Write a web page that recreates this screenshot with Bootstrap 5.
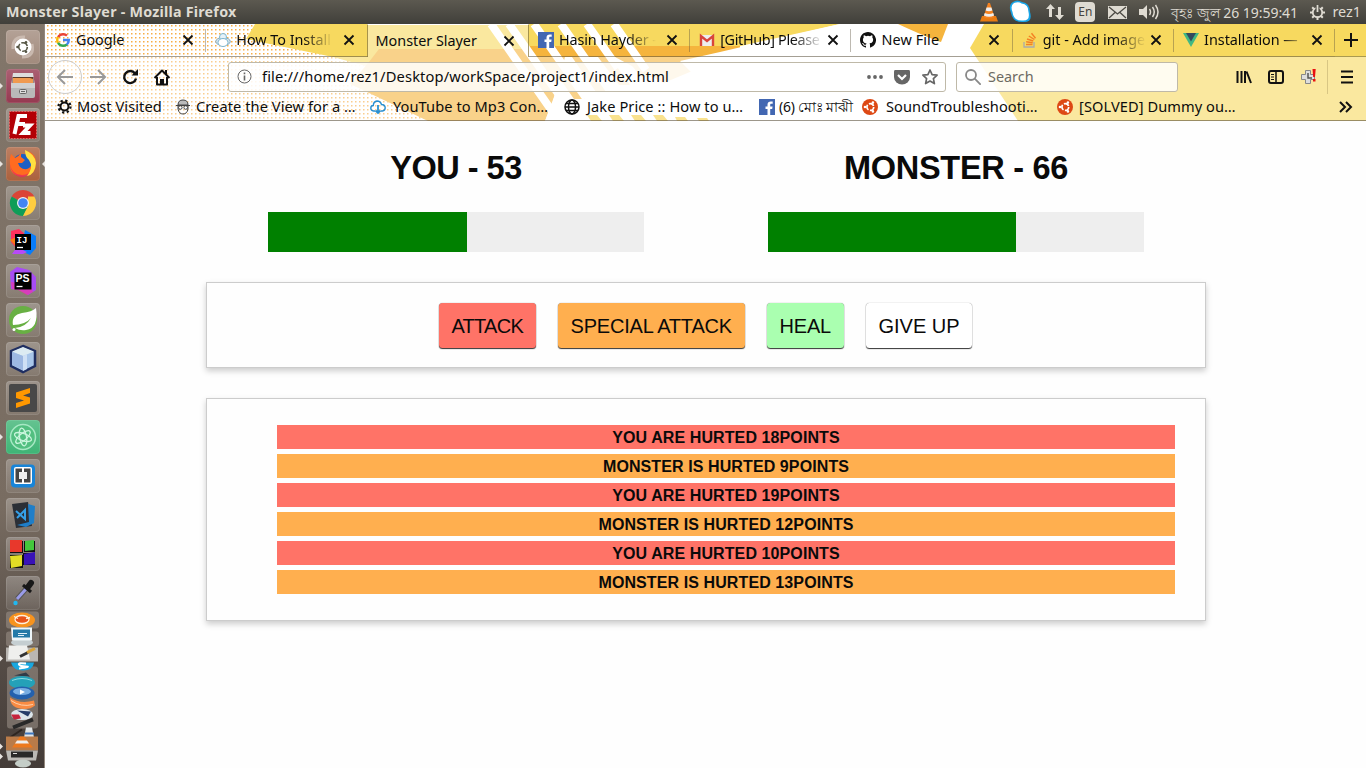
<!DOCTYPE html>
<html lang="en">
<head>
<meta charset="utf-8">
<title>Monster Slayer - Mozilla Firefox</title>
<link href="https://cdn.jsdelivr.net/npm/bootstrap@5.3.0/dist/css/bootstrap.min.css" rel="stylesheet">
<script src="https://cdn.jsdelivr.net/npm/bootstrap@5.3.0/dist/js/bootstrap.bundle.min.js"></script>
<style>
body{height:768px;overflow:hidden;font-family:"Noto Sans","Open Sans",sans-serif;font-size:14.4px;color:#0c0c0c;background:#fefefe}
svg{display:block;flex:none}
.topbar{height:24px;background:linear-gradient(#5c5950,#403f3a);color:#dfdbd2;padding:0 5px 0 6px}
.topbar b{font-size:14.3px;letter-spacing:.23px}
.topbar .clock{font-size:14px;letter-spacing:-.05px;width:128px;white-space:nowrap}
.dock{width:45px;border-right:1px solid #93887e;padding:5.5px 0 0 5.5px;flex:none;background:linear-gradient(#82766a,#786c61 65%,#554c46 85%,#443c38)}
.tile{width:34px;height:34px;margin-bottom:5px;border-radius:4px;background:linear-gradient(rgba(255,255,255,.26),rgba(255,255,255,.08));box-shadow:inset 0 0 0 1px rgba(255,255,255,.1);position:relative;flex:none}
.tile.run::before{content:"";position:absolute;left:-5.5px;top:14px;border:3px solid transparent;border-left:3px solid #e8e4e0;border-right:0}
.tile.focus::after{content:"";position:absolute;right:-5px;top:14px;border:3px solid transparent;border-right:3px solid #e8e4e0;border-left:0}
.chrome{height:97px;position:relative;isolation:isolate}
.theme{position:absolute;inset:0;z-index:-1}
.tabrow{height:33px}
.tabx{width:161.3px;height:33px;padding:0 11px;gap:5px;position:relative;flex:none;border-bottom:1px solid rgba(90,80,60,.55)}
.tabx::after{content:"";position:absolute;right:0;top:5px;bottom:4px;width:1px;background:rgba(90,80,60,.4)}
.tabx.on{width:162.3px;margin-left:-1px;background:rgba(255,255,255,.4);border:1px solid rgba(110,90,20,.6);border-top:1px solid #fff;border-bottom:0}
.tabx.on::after,.tabx.noline::after{display:none}
.tabx span{width:97px;white-space:nowrap;overflow:hidden;letter-spacing:-.03px;flex:none}
.tabx .fade-r{-webkit-mask-image:linear-gradient(90deg,#000 70%,transparent 100%)}
.tabx .x{margin-left:auto;margin-right:1.5px}
.navrow{height:39px}
.field{height:30px;border:1px solid #bfb9a8;border-radius:3px;background:rgba(255,255,255,.84)}
.url{font-size:14.7px;letter-spacing:.13px;margin-left:2px}
.bmrow{height:25px;border-bottom:1px solid rgba(90,80,60,.6);padding:0 0 2px 12px}
.bm{white-space:nowrap;gap:5px;flex:none;font-size:14.6px;letter-spacing:.08px}
.game{width:1000px;margin-left:161px;font-family:"Liberation Sans",sans-serif;color:#0a0a0a}
.game h1{font-size:32.5px;font-weight:700;line-height:45px;letter-spacing:-.3px;margin:0 0 21px;padding-top:25px}
.track{width:376px;height:40px;background:#eee}
.track div{height:40px;background:green}
.panel{border:1px solid #ccc;box-shadow:0 3px 6px #ccc;background:#fefefe;margin-top:30px}
.controls{height:86px;padding-top:20px;gap:22.500px;padding-right:1px}
.act{font-size:20px;line-height:20px;height:44.500px;border:0;border-radius:3.500px;box-shadow:0 1px 1px #333,0 0 1px #888;padding:1px 0 0;color:#0a0a0a;white-space:nowrap}
.log{height:223px;padding:26px 30px 0 70px}
.log li{height:24px;line-height:24px;padding-top:1px;margin-bottom:5px;font-size:16px;font-weight:700;text-align:center;letter-spacing:.1px}
.you{background:#ff7367}.mon{background:#ffaf4f}.heal{background:#aaffb0}
</style>
</head>
<body class="d-flex flex-column">
<svg width="0" height="0" class="position-absolute"><defs>
<symbol id="x" viewBox="0 0 12 12"><path d="M1.5 1.5l9 9M10.5 1.5l-9 9" stroke="#111" stroke-width="1.8"/></symbol>
<symbol id="fb" viewBox="0 0 16 16"><path fill="#4267b2" d="M0 0h16v16H0z"/><path fill="#fff" d="M8.5 16V10H6.5V7.4h2V5.8C8.500 3.500 9.800 2.500 11.800 2.500h1.900v2.300h-1.300c-1 0-1.200.5-1.200 1.200v1.400h2.400L13.200 10h-2v6z"/></symbol>
<symbol id="ub" viewBox="0 0 16 16"><circle cx="8" cy="8" r="8" fill="#dd4814"/><circle cx="8.300" cy="8" r="3.400" fill="none" stroke="#fff" stroke-width="1.700" stroke-dasharray="5.600 1.500"/><g fill="#fff"><circle cx="3" cy="8" r="1.300"/><circle cx="10.900" cy="3.600" r="1.300"/><circle cx="10.900" cy="12.400" r="1.300"/></g></symbol>
<symbol id="cone" viewBox="0 0 20 20"><path fill="#e87b12" d="M3 14h14l2 5.500H1z"/><path fill="#f58220" d="M9 1h2l4.500 14q-5.500 3-11 0z"/><path fill="#eee" d="M7.600 5.500h4.800l1 3q-3.400 1.600-6.800 0zM5.800 11q4.200 2 8.400 0l.9 2.600q-5 2.400-10.200 0z"/></symbol>
</defs></svg>

<header class="topbar d-flex align-items-center">
  <b>Monster Slayer - Mozilla Firefox</b>
  <div class="d-flex align-items-center ms-auto">
    <svg width="20" height="20" style="margin-right:9px"><use href="#cone"/></svg>
    <svg width="26" height="24" style="margin-right:11px" viewBox="0 0 26 24"><path fill="#18a5e8" d="M5 2q4-3 9 0 8 1 8 10 3 10-6 10-11 1-13-9Q0 5 5 2z"/><path fill="#fff" d="M6 3q5-1.500 7.500.5Q20.500 4 20.500 12q2 9-6 8.500Q5.500 21 4.500 12 2 5.500 6 3z"/></svg>
    <svg width="20" height="18" viewBox="0 0 20 18" class="me-2"><path fill="#dfdbd2" d="M5.500 1L10 6H7v8H4V6H1zM14.500 17L10 12h3V4h3v8h3z"/></svg>
    <div class="rounded-1 text-center me-2" style="width:20px;height:20px;line-height:20px;font-size:12px;margin-left:2px;background:#dfdbd2;color:#45433e">En</div>
    <svg width="19" height="13" viewBox="0 0 19 13" style="margin:0 11px 0 5px"><path fill="#dfdbd2" d="M0 0h19v13H0z"/><path fill="none" stroke="#4b4943" stroke-width="1.300" d="M1 1l8.500 7L18 1M1 12l6-5.500M18 12l-6-5.500"/></svg>
    <svg width="22" height="18" viewBox="0 0 22 18" class="me-2"><path fill="#dfdbd2" d="M1 6h4l4-4v14l-4-4H1z"/><path fill="none" stroke="#dfdbd2" stroke-width="1.500" d="M11.500 6q2 3 0 6M14.500 4q3.500 5 0 10M17.500 2q5 7 0 14"/></svg>
    <span class="clock" style="margin-left:3px">বৃহঃ জুল 26 19:59:41</span>
    <svg width="17" height="17" viewBox="0 0 17 17" style="margin:0 6px 0 10px"><circle cx="8.500" cy="8.500" r="4.700" fill="none" stroke="#dfdbd2" stroke-width="1.800"/><g stroke="#dfdbd2" stroke-width="2"><path d="M8.500 12.500V16M1 8.500h3M13 8.500h3M3.200 3.200l2 2M13.800 3.200l-2 2M3.200 13.800l2-2M13.800 13.800l-2-2"/></g><path stroke="#4a4842" stroke-width="4" d="M8.500 1v6"/><path stroke="#dfdbd2" stroke-width="1.800" d="M8.500 1v7"/></svg>
    <span>rez1</span>
  </div>
</header>

<div class="d-flex flex-grow-1" style="min-height:0">
<aside class="dock d-flex flex-column">
  <div class="tile" style="background-color:#9a8172"><svg width="34" height="34" viewBox="0 0 34 34"><path d="M7 19q-1-13 12-12M26 14q3 13-10 13" fill="none" stroke="#c9b9af" stroke-width="3"/><circle cx="17" cy="17" r="8.500" fill="#fff"/><circle cx="17" cy="17" r="4.300" fill="none" stroke="#554" stroke-width="1.600" stroke-dasharray="7.400 1.600"/><g fill="#554"><circle cx="11.500" cy="17" r="1.300"/><circle cx="20" cy="12.200" r="1.300"/><circle cx="20" cy="21.800" r="1.300"/></g></svg></div>
  <div class="tile run" style="background-color:#8d2842"><svg width="34" height="34" viewBox="0 0 34 34"><path fill="#ddd" d="M7 4h20l2 13H5z"/><path fill="#5b3b2a" d="M6.500 8h21v6h-21z"/><path fill="#f09a50" d="M7 9h17l3 1v4H7z"/><path fill="#b9b9b9" d="M5 14h24v13q0 2-2 2H7q-2 0-2-2z"/><path fill="#d0d0d0" d="M5 14h24v5H5z"/><rect x="13.500" y="20.500" width="7" height="4" rx="1" fill="#ddd" stroke="#666"/><path stroke="#666" d="M15 22.500h4"/></svg></div>
  <div class="tile"><svg width="34" height="34" viewBox="0 0 34 34"><path fill="#b30006" stroke="#e66" stroke-dasharray="1.500 1.500" d="M3.500 3.500h27v27h-27z"/><path fill="none" stroke="#fff" stroke-width="4" d="M21 8h-8.500L8.500 26M11 16h8M17 17.500h7l-7 7.500h7.500"/></svg></div>
  <div class="tile run focus" style="background-color:#a4532c"><svg width="34" height="34" viewBox="0 0 34 34"><circle cx="17" cy="18" r="11" fill="#1b5fc4"/><path fill="#ff6b20" d="M5 7l4 4q4-2 6-5v4l4 3-3 3h-4q2 7 9 6 6-2 4-10-1-4-3-8 8 3 8 12 0 13-13 13T4 18Q3 12 5 7z"/><path fill="#ffe040" d="M19 3q10 4 11 13-1 12-9 13 7-9 2-16-4-3-4-10z"/><path fill="#ed275e" opacity=".7" d="M4 17q2 11 12 11 4 0 7-2-3 5-9 4-9-2-10-13z"/></svg></div>
  <div class="tile"><svg width="34" height="34" viewBox="0 0 34 34"><path fill="#db4437" d="M5.700 10.500a13 13 0 0 1 22.600 0L17 17z"/><path fill="#0f9d58" d="M5.700 10.500A13 13 0 0 0 17 30l5.500-10L17 17z"/><path fill="#ffcd40" d="M28.300 10.500A13 13 0 0 1 17 30l5-10V10.500z"/><circle cx="17" cy="17" r="6" fill="#f2f2f2"/><circle cx="17" cy="17" r="4.800" fill="#4285f4"/></svg></div>
  <div class="tile"><svg width="34" height="34" viewBox="0 0 34 34"><path fill="#fe315d" d="M5 6l8-2 7 6-8 15-7-8z"/><path fill="#f97a12" d="M4 15l6-3v9z"/><path fill="#087cfa" d="M19 5l11 6v12l-6 7-9-4z"/><path fill="#b74af7" d="M6 29l5-7 10 5-4 2z"/><path fill="#000" d="M9 9h16v16H9z"/><path stroke="#fff" d="M11 22.500h6" stroke-width="1.300"/><text x="10.500" y="18" font-size="9" font-weight="700" fill="#fff" font-family="Liberation Mono">IJ</text></svg></div>
  <div class="tile"><svg width="34" height="34" viewBox="0 0 34 34"><path fill="#a74cf5" d="M4 8l7-5 12 3 7 7v13l-8 5-9-5-8-1z"/><path fill="#ff318c" d="M5 18l20 4 2 6-6 3-9-5-6-1z" opacity=".55"/><path fill="#000" d="M8.500 8.500h17v17h-17z"/><path stroke="#fff" stroke-width="1.300" d="M10.500 22.500h6"/><text x="9.500" y="18" font-size="10.500" font-weight="700" fill="#fff" font-family="Liberation Sans">PS</text></svg></div>
  <div class="tile"><svg width="34" height="34" viewBox="0 0 34 34"><circle cx="17" cy="17" r="14" fill="#68b043"/><path fill="#fff" d="M30 5q3 20-10 22-6 1-11-2 11-1 16-10-6 7-18 7-2-10 9-12 10-1 14-5z"/><circle cx="8" cy="26.500" r="1.500" fill="#fff"/></svg></div>
  <div class="tile"><svg width="34" height="34" viewBox="0 0 34 34"><path fill="#a8c6ea" stroke="#1f2e61" stroke-width="2.500" d="M17 4l12 5v15l-12 6-12-6V9z"/><path fill="#dcebf2" d="M17 5l11 4.500L17 14 6 9.500z"/><path fill="#9db8e2" d="M6 10l11 4v14L6 23z"/><path fill="#cfe0f5" d="M17 14l4-2v15l-4 2z"/></svg></div>
  <div class="tile"><svg width="34" height="34" viewBox="0 0 34 34"><rect x="3" y="3" width="28" height="28" rx="2" fill="#484848"/><path fill="#ff9800" d="M10 11.500L24 7v5l-7 2.500 7 2v6L10 27v-5l8-2.500-8-2.500z"/></svg></div>
  <div class="tile run" style="background-color:#2fae6a"><svg width="34" height="34" viewBox="0 0 34 34"><circle cx="17" cy="17" r="12.500" fill="#52bf80" stroke="#a7e8c4" stroke-width="1.500"/><g fill="none" stroke="#c9f5dc" stroke-width="1.300"><ellipse cx="17" cy="17" rx="9" ry="3.500" transform="rotate(20 17 17)"/><ellipse cx="17" cy="17" rx="9" ry="3.500" transform="rotate(80 17 17)"/><ellipse cx="17" cy="17" rx="9" ry="3.500" transform="rotate(140 17 17)"/></g></svg></div>
  <div class="tile"><svg width="34" height="34" viewBox="0 0 34 34"><rect x="5" y="5.500" width="24" height="23" rx="4" fill="#1784d8"/><rect x="8" y="8" width="18" height="17" rx="2" fill="#fff"/><path fill="#454545" d="M9.500 9.500h15v14h-15z"/><path stroke="#fff" stroke-width="2" d="M17 9v15"/><path fill="#eee" d="M13 13h8v7h-8z"/></svg></div>
  <div class="tile"><svg width="34" height="34" viewBox="0 0 34 34"><path fill="#2b2f36" d="M6 6l16-2 4 24-16 2z"/><path fill="#1f7ec8" d="M22 6l7 2-1 17-8 4-9-2 12-3z"/><path fill="none" stroke="#35a0e8" stroke-width="2" d="M10 13l9 8V12l-8 8"/></svg></div>
  <div class="tile"><svg width="34" height="34" viewBox="0 0 34 34"><path fill="#111" d="M4 4h13v12H4zM18 4h11v11H18zM4 18h13v13H4zM17 16h12v12H17z"/><path fill="#e8382c" d="M4 3h12v12H4z"/><path fill="#43c83c" d="M19 4l9-1v10l-9 1z"/><path fill="#e3dc25" d="M4 19l12-1v11l-11 2z"/><path fill="#3912b8" d="M18 17l11-2v12l-11 1z"/></svg></div>
  <div class="tile"><svg width="34" height="34" viewBox="0 0 34 34"><path stroke="#555" stroke-width="5" d="M11 23l9-10"/><path stroke="#9a9be8" stroke-width="3" d="M11 23l9-10"/><path stroke="#181818" stroke-width="6" stroke-linecap="round" d="M22 11l3-4"/><path stroke="#181818" stroke-width="3" d="M17 9l8 7"/><circle cx="9.500" cy="27" r="2.200" fill="#20b8f0"/></svg></div>
  <svg width="44" height="159" viewBox="0 610 44 158" style="margin:-5px 0 0 -5.500px">
    <g fill="#a59a91" opacity=".5"><rect x="6" y="611" width="33" height="17" rx="3"/><rect x="6" y="631" width="33" height="15" rx="3"/><rect x="7" y="666" width="31" height="62" rx="3"/></g>
    <ellipse cx="22" cy="619.500" rx="13" ry="7.500" fill="#f7931e"/><ellipse cx="22" cy="619" rx="7" ry="4" fill="#e8541a" stroke="#fff1dc" stroke-width="1.300"/><path d="M14 616l4 2M30 617l-4 1" stroke="#fff1dc" stroke-width="1.300"/>
    <ellipse cx="22" cy="642" rx="11" ry="4" fill="#c5ced1"/><path fill="#eef5f8" d="M11 627h21v13H12z"/><path fill="#2379a8" d="M13 629h17v8H13z"/><path stroke="#dfeff8" d="M18 633h9M18 635h6"/>
    <path fill="#b9b6b2" d="M6 647h32v14H6z"/><path fill="#efefed" d="M9 645h18l3 14H8z"/><path stroke="#333" stroke-width="3" d="M20 656l8-4"/><path stroke="#d9a43a" stroke-width="3" d="M27 652l8-4"/>
    <path fill="#18a7e0" d="M11 662h23q-1 8-11 8t-12-8z"/><path stroke="#fff" stroke-width="2" fill="none" d="M26 663q-8-1-7 1t7 2-7 2"/>
    <path fill="#303c48" d="M14 675l12-3 4 4z"/><ellipse cx="22" cy="682" rx="13" ry="6.500" fill="#24a1b8"/><path fill="none" stroke="#8bdce2" d="M12 680q10-4 20 0"/>
    <ellipse cx="22" cy="692.500" rx="12.500" ry="6.500" fill="#2461ad"/><ellipse cx="22" cy="691" rx="9" ry="3.500" fill="#78ade2"/><path fill="#fff" d="M20 689l5 2.500-5 2.500z"/>
    <path fill="#f98b43" d="M10 697q10 7 24 3l1 5q-7 6-19 2-6-3-6-10z"/><path fill="none" stroke="#ffd0aa" d="M11 700q10 7 22 4"/>
    <ellipse cx="22" cy="714" rx="11" ry="5.500" fill="#dce5ea"/><path fill="#253c68" d="M17 710l14 1-3 5z"/><path fill="#c6233d" d="M11 714h8l2 4-7 1z"/>
    <path stroke="#292929" stroke-width="4" d="M13 727l20-8"/><path fill="#e1e4e5" d="M26 727h6l2 10h-10z"/><path fill="#3e76bc" d="M25 732h9v2h-9z"/><path stroke="#2d2520" stroke-width="2" d="M10 737l12-8"/>
    <path fill="#b97b49" d="M6 736h32v14H6z"/><path fill="#ed791e" d="M20 736h4l9 11H12z"/><path fill="#eee" d="M17 740h10l2 3H15z"/>
    <path fill="#bbb9b5" d="M6 750h32l-2 10H8z"/><path fill="#292929" d="M11 751h22v6H11z"/><path stroke="#ddd" d="M13 753h4"/><ellipse cx="23" cy="763" rx="8" ry="4" fill="#c4cdc7"/>
    <path fill="#e8e4e0" d="M0 655l3 3-3 3zM0 743l3 3-3 3zM0 753l3 3-3 3z"/>
  </svg>
</aside>

<div class="flex-grow-1" style="min-width:0">
<div class="chrome">
  <svg class="theme" width="1321" height="97" viewBox="45 24 1321 97">
    <defs><pattern id="dots" width="4" height="4" x="47" y="25" patternUnits="userSpaceOnUse"><path fill="#f7ae45" d="M0 0h1.500v1.500H0z"/></pattern></defs>
    <path fill="#fff" d="M45 24h1321v97H45z"/><path fill="url(#dots)" d="M45 24h385v97H45z"/>
    <path fill="#f7d95f" d="M255 24h585L745 45l-65 16-20 20H420L333 57l-87-18z"/>
    <path fill="#fff" d="M340 60l35 8-25 16-40-18z" opacity=".6"/>
    <path fill="#f5b43d" d="M379 49h148l30 40-12 32H428L350 84l19-22zM527 46h213v5l-93 39-90 0h-40z"/>
    <path fill="#fff" d="M565 57h50l120 64H545l8-20z"/>
    <g fill="#f5b43d"><path d="M545 57h11l29 42h-11zM572 57h10l24 35h-10zM598 57h12l20 28h-11zM625 57h14l14 20h-12zM651 57h45l-35 13z"/></g>
    <g stroke="#fff" stroke-width="8"><path d="M491 24l68 97M509 24l60 85M534 24l52 74M561 24l40 57M587 24l31 44M614 24l32 46"/></g>
    <g fill="#f5cf45"><path d="M587 115h10l5 6h-11zM609 115h10l5 6h-11zM631 115h10l5 6h-11zM653 115h10l5 6h-11zM675 117h10l3 4h-11zM697 118h10l2 3h-10z"/></g>
    <path fill="#fff" d="M840 24L720 52l-40 9 20 20h200V24z"/>
    <path fill="#f5b43d" d="M898 24h50l-7 18q-15-5-43-18z"/>
    <path fill="#f7d95f" d="M984 24h382v97h-348l-48-73z"/>
    <path fill="#fff" opacity=".4" d="M45 57h1321v64H45z"/>
  </svg>
  <div class="tabrow d-flex">
    <div class="tabx d-flex align-items-center"><svg width="14" height="14" viewBox="0 0 14 14" fill="none" stroke-width="2.400"><path stroke="#ea4335" d="M2 4.200Q4 1.200 7 1.200q2.500 0 4 1.500"/><path stroke="#fbbc05" d="M2 4Q.5 7 2 10"/><path stroke="#34a853" d="M2 9.800q2 3 5 3 2.500 0 4-1.500"/><path stroke="#4285f4" d="M7 7h5.800q0 3-2 4.500"/></svg><span style="margin-left:1px">Google</span><svg width="12" height="12" class="x"><use href="#x"/></svg></div>
    <div class="tabx noline d-flex align-items-center" style="padding-left:9px"><svg width="16" height="16" viewBox="0 0 16 16"><ellipse cx="8" cy="9.500" rx="7.300" ry="4" fill="#d7e6ee" stroke="#8ab"/><circle cx="8" cy="5" r="3.500" fill="#e5f2f8" stroke="#7bb5d0"/><ellipse cx="8" cy="10.500" rx="5" ry="4" fill="#fff" stroke="#7bb5d0"/></svg><span class="fade-r">How To Install</span><svg width="12" height="12" class="x"><use href="#x"/></svg></div>
    <div class="tabx on d-flex align-items-center" style="padding-left:8px"><span style="width:117px">Monster Slayer</span><svg width="12" height="12" class="x"><use href="#x"/></svg></div>
    <div class="tabx d-flex align-items-center" style="padding-left:9px"><svg width="16" height="16"><use href="#fb"/></svg><span class="fade-r" style="letter-spacing:-.1px">Hasin Hayder -</span><svg width="12" height="12" class="x"><use href="#x"/></svg></div>
    <div class="tabx d-flex align-items-center" style="padding-left:9px"><svg width="16" height="16" viewBox="0 0 16 16"><path fill="#eee" d="M1 3h14v11H1z"/><path fill="none" stroke="#d9453c" stroke-width="2.400" d="M2 14V4l6 5 6-5v10"/></svg><span class="fade-r" style="width:103px;margin-right:-6px;letter-spacing:-.35px">[GitHub] Please</span><svg width="12" height="12" class="x"><use href="#x"/></svg></div>
    <div class="tabx d-flex align-items-center" style="padding-left:9px"><svg width="16" height="16" viewBox="0 0 16 16"><path fill="#111" d="M8 0C3.580 0 0 3.580 0 8c0 3.540 2.290 6.530 5.470 7.590.4.070.55-.17.55-.38 0-.19-.01-.82-.01-1.490-2.010.37-2.530-.49-2.690-.94-.09-.23-.48-.94-.82-1.130-.28-.15-.68-.52-.01-.53.63-.01 1.080.58 1.230.82.720 1.210 1.870.87 2.330.66.070-.52.280-.87.510-1.070-1.780-.2-3.640-.89-3.640-3.950 0-.87.310-1.590.82-2.150-.08-.2-.36-1.020.08-2.120 0 0 .67-.21 2.200.82a7.500 7.500 0 0 1 4 0c1.530-1.040 2.200-.82 2.200-.82.440 1.100.160 1.920.080 2.120.510.560.82 1.270.82 2.150 0 3.070-1.870 3.750-3.650 3.950.290.250.540.730.540 1.480 0 1.070-.01 1.930-.01 2.200 0 .210.150.460.550.380A8 8 0 0 0 8 0z"/></svg><span style="letter-spacing:.1px">New File</span><svg width="12" height="12" class="x"><use href="#x"/></svg></div>
    <div class="tabx d-flex align-items-center" style="padding-left:9px"><svg width="16" height="16" viewBox="0 0 16 16" fill="none"><path stroke="#aaa" stroke-width="1.300" d="M2 10v5h10v-5"/><path stroke="#f48024" stroke-width="1.400" d="M4 12.500h6.500M4.200 9.800l6.500.9M5 7l6.300 2M6.800 4l5.600 3.500M9.500 1.200l4 5"/></svg><span class="fade-r" style="width:103px;margin-right:-6px">git - Add image</span><svg width="12" height="12" class="x"><use href="#x"/></svg></div>
    <div class="tabx d-flex align-items-center" style="padding-left:9px"><svg width="16" height="14" viewBox="0 0 16 14"><path fill="#41b883" d="M0 0h16L8 14z"/><path fill="#35495e" d="M3 0h10L8 8.500z"/></svg><span class="fade-r" style="-webkit-mask-image:linear-gradient(90deg,#000 80%,transparent 105%)">Installation —</span><svg width="12" height="12" class="x"><use href="#x"/></svg></div>
    <div class="flex-grow-1 d-flex align-items-center justify-content-center border-bottom" style="border-color:#aa9a50!important"><svg width="14" height="14"><path d="M7 0v14M0 7h14" stroke="#111" stroke-width="2"/></svg></div>
  </div>
  <div class="navrow d-flex align-items-center">
    <svg width="183" height="38" viewBox="45 58 183 38" fill="none"><circle cx="65" cy="77" r="16.500" fill="rgba(255,255,255,.4)" stroke="#ccc"/><path stroke="#999" stroke-width="2" d="M73 77H58.500M65 70l-7 7 7 7M90 77h14.500M98 70l7 7-7 7"/><path stroke="#111" stroke-width="2.400" d="M135 73.500a6 6 0 1 0 1 5"/><path fill="#111" d="M131.500 75.500h6.500V69z"/><path stroke="#111" stroke-width="2" stroke-linejoin="round" d="M154.500 78l7.500-7.500 7.500 7.500M157 77v7.500h10V77"/><path fill="#111" d="M160 79h4v6h-4zM165 70h2v5l-2-2z"/></svg>
    <div class="field d-flex align-items-center" style="width:718px;padding:0 6px 0 8px"><svg width="15" height="15" viewBox="0 0 15 15" class="me-2"><circle cx="7.500" cy="7.500" r="6.500" fill="none" stroke="#666"/><path stroke="#666" stroke-width="1.600" d="M7.500 6.500v5M7.500 3.500v1.700"/></svg><span class="url">file:///home/rez1/Desktop/workSpace/project1/index.html</span>
      <svg class="ms-auto" width="74" height="18" viewBox="-1 0 74 18"><g fill="#666"><circle cx="3" cy="9" r="1.900"/><circle cx="9" cy="9" r="1.900"/><circle cx="15" cy="9" r="1.900"/><path d="M29 2h14q1 0 1 1.500V9a8 7.500 0 0 1-16 0V3.500Q28 2 29 2z"/></g><path fill="none" stroke="#fff" stroke-width="2.200" d="M32 7l4 4 4-4"/><path fill="none" stroke="#666" stroke-width="1.700" stroke-linejoin="round" d="M64 2l2.100 4.600 5 .6-3.700 3.400 1 5L64 13l-4.400 2.600 1-5-3.700-3.400 5-.6z"/></svg></div>
    <div class="field d-flex align-items-center" style="width:222px;margin-left:10px;padding-left:8px"><svg width="16" height="16" viewBox="0 0 16 16" fill="none" stroke="#888" stroke-width="1.800"><circle cx="6" cy="6" r="5"/><path d="M9.700 9.700l6 6"/></svg><span style="margin-left:7px;color:#6d6a62">Search</span></div>
    <svg width="188" height="38" viewBox="1178 58 188 38"><g stroke="#111" stroke-width="2" fill="none"><path d="M1237.500 71v12M1241.500 71v12M1245 71v12M1246.500 71.500l4.500 11.500"/><rect x="1269" y="71" width="14" height="12" rx="2"/><path d="M1276 71v12" stroke-width="1.500"/><path d="M1271 74.500h3M1271 77h3M1271 79.500h3" stroke-width="1"/><path d="M1341 71.500h12M1341 77h12M1341 82.500h12"/></g><path fill="#ddd" stroke="#888" d="M1305.500 70.500h5v4h4v5h-4v4h-5v-4h-4v-5h4z"/><path stroke="#555" fill="none" stroke-width="1.500" d="M1308 73v5h4"/><path fill="#e81010" d="M1312.500 69h3.200l-.7 8h-1.800zM1313 79h2.500v2.500h-2.500z"/><path stroke="#d8c684" d="M1327.500 60v34"/></svg>
  </div>
  <div class="bmrow d-flex align-items-center">
    <div class="bm d-flex align-items-center" style="width:118px"><svg width="15" height="15" viewBox="0 0 15 15" fill="none" stroke="#111"><circle cx="7.500" cy="7.500" r="4" stroke-width="2"/><circle cx="7.500" cy="7.500" r="6" stroke-width="2.300" stroke-dasharray="2.200 2.510"/></svg><span>Most Visited</span></div>
    <div class="bm d-flex align-items-center" style="width:195px"><svg width="16" height="16" viewBox="0 0 16 16" fill="none" stroke="#444"><path fill="#bbb" d="M3 6q0-5 5-5t5 5z"/><path d="M3 6v4q1 5 5 5t5-5V6M1 6.500h14"/><circle cx="5.300" cy="8.500" r="1.800"/><circle cx="10.700" cy="8.500" r="1.800"/></svg><span>Create the View for a …</span></div>
    <div class="bm d-flex align-items-center" style="width:193px;gap:7px"><svg width="16" height="16" viewBox="0 0 16 16" fill="none" stroke="#2a8fd0" stroke-width="1.400"><path d="M5 12H3.500Q.7 11.500.8 9t2.500-2.500Q3.500 2.500 7 2q3.500 0 4.500 3.500 3.500 0 3.700 3.200 0 3-2.700 3.300H11"/><path d="M8 6v8M5.500 11.500L8 14l2.500-2.500" stroke-width="1.800"/></svg><span>YouTube to Mp3 Con…</span></div>
    <div class="bm d-flex align-items-center" style="width:196px;gap:7px;padding-left:1px"><svg width="16" height="16" viewBox="0 0 16 16" fill="none" stroke="#111" stroke-width="1.500"><circle cx="8" cy="8" r="7"/><ellipse cx="8" cy="8" rx="3.500" ry="7"/><path d="M1 8h14M2 4.500h12M2 11.500h12"/></svg><span>Jake Price :: How to u…</span></div>
    <div class="bm d-flex align-items-center" style="width:103px;gap:4px"><svg width="16" height="16"><use href="#fb"/></svg><span style="font-size:13.900px;letter-spacing:-.2px">(6) মোঃ মাঝী</span></div>
    <div class="bm d-flex align-items-center" style="width:195px;gap:8px"><svg width="16" height="16"><use href="#ub"/></svg><span>SoundTroubleshooti…</span></div>
    <div class="bm d-flex align-items-center" style="width:200px;gap:6px"><svg width="16" height="16"><use href="#ub"/></svg><span>[SOLVED] Dummy ou…</span></div>
    <svg width="14" height="12" viewBox="0 0 14 12" class="ms-auto" style="margin-right:13px"><path fill="none" stroke="#111" stroke-width="2" d="M1 1l5 5-5 5M7 1l5 5-5 5"/></svg>
  </div>
</div>

<main class="game">
  <div class="row g-0 text-center">
    <div class="col-6 d-flex flex-column align-items-center"><h1 style="letter-spacing:-.5px">YOU - 53</h1><div class="track"><div style="width:53%"></div></div></div>
    <div class="col-6 d-flex flex-column align-items-center"><h1>MONSTER - 66</h1><div class="track"><div style="width:66%"></div></div></div>
  </div>
  <section class="panel controls d-flex justify-content-center align-items-start">
    <button class="act you" style="width:96.500px;letter-spacing:-.7px">ATTACK</button>
    <button class="act mon" style="width:186.500px;letter-spacing:-.2px">SPECIAL ATTACK</button>
    <button class="act heal" style="width:76.500px;letter-spacing:-.2px">HEAL</button>
    <button class="act" style="width:106px;background:#fff">GIVE UP</button>
  </section>
  <section class="panel log">
    <ul class="list-unstyled m-0">
      <li class="you">YOU ARE HURTED 18POINTS</li>
      <li class="mon">MONSTER IS HURTED 9POINTS</li>
      <li class="you">YOU ARE HURTED 19POINTS</li>
      <li class="mon">MONSTER IS HURTED 12POINTS</li>
      <li class="you">YOU ARE HURTED 10POINTS</li>
      <li class="mon">MONSTER IS HURTED 13POINTS</li>
    </ul>
  </section>
</main>
</div>
</div>
</body>
</html>
